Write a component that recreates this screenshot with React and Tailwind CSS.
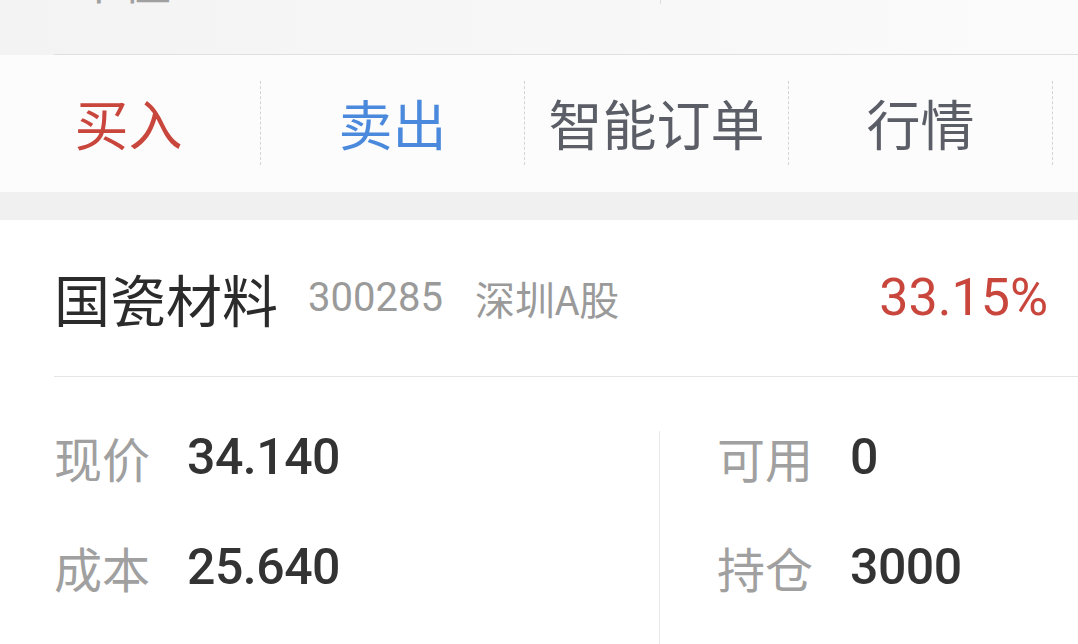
import React from "react";

const tabs = [
  { label: "买入", color: "text-[#c9463d]" },
  { label: "卖出", color: "text-[#4b89dc]" },
  { label: "智能订单", color: "text-[#5b5e66]" },
  { label: "行情", color: "text-[#5b5e66]" },
];

function Stat({ label, value }) {
  return (
    <div className="flex items-center h-[52px]">
      <span className="text-[48px] leading-none text-[#a0a0a0] w-[133px] shrink-0">{label}</span>
      <span className="text-[50px] leading-none font-medium text-[#333333] font-['Roboto',sans-serif] tracking-[-0.5px]">{value}</span>
    </div>
  );
}

export default function App() {
  return (
    <div className="w-[1078px] h-[644px] overflow-hidden bg-white font-['Noto_Sans_CJK_SC','Noto_Sans',sans-serif]">
      {/* tail of the previous card */}
      <div className="h-[55px] bg-gradient-to-r from-[#f3f3f3] to-[#fbfbfb]">
        <div className="ml-[54px] h-[55px] border-b border-[#e0e0e0] flex overflow-hidden">
          <div className="w-[606px] -mt-[46px] pl-[21px] text-[48px] leading-none text-[#a0a0a0]">市值</div>
          <div className="h-[4px] border-l border-[#dddddd]" />
        </div>
      </div>

      {/* action tabs */}
      <div className="h-[137px] bg-[#fcfcfc] flex items-center">
        <div className="flex -ml-[3px] -mt-[2px]">
          {tabs.map((t) => (
            <div key={t.label} className="w-[264px] h-[84px] border-r border-dashed border-[#d4d4d4] flex items-center justify-center">
              <span className={`text-[54px] leading-none ${t.color}`}>{t.label}</span>
            </div>
          ))}
        </div>
      </div>

      <div className="h-[28px] bg-[#f0f0f0]" />

      {/* position card */}
      <div className="pl-[54px]">
        <div className="h-[157px] border-b border-[#e6e6e6] flex items-center pr-[30px]">
          <span className="text-[56px] leading-none text-[#2b2b2b]">国瓷材料</span>
          <span className="ml-[30px] text-[40px] leading-none text-[#9a9a9a] font-['Roboto',sans-serif]">300285</span>
          <span className="ml-[32px] text-[40px] leading-none text-[#9a9a9a]">深圳A股</span>
          <span className="ml-auto text-[52px] leading-none text-[#c9463d] font-['Roboto',sans-serif]">33.15%</span>
        </div>
        <div className="flex mt-[54px]">
          <div className="w-[606px] border-r border-[#e8e8e8] flex flex-col gap-[58px] pb-[60px]">
            <Stat label="现价" value="34.140" />
            <Stat label="成本" value="25.640" />
          </div>
          <div className="pl-[57px] flex flex-col gap-[58px]">
            <Stat label="可用" value="0" />
            <Stat label="持仓" value="3000" />
          </div>
        </div>
      </div>
    </div>
  );
}
